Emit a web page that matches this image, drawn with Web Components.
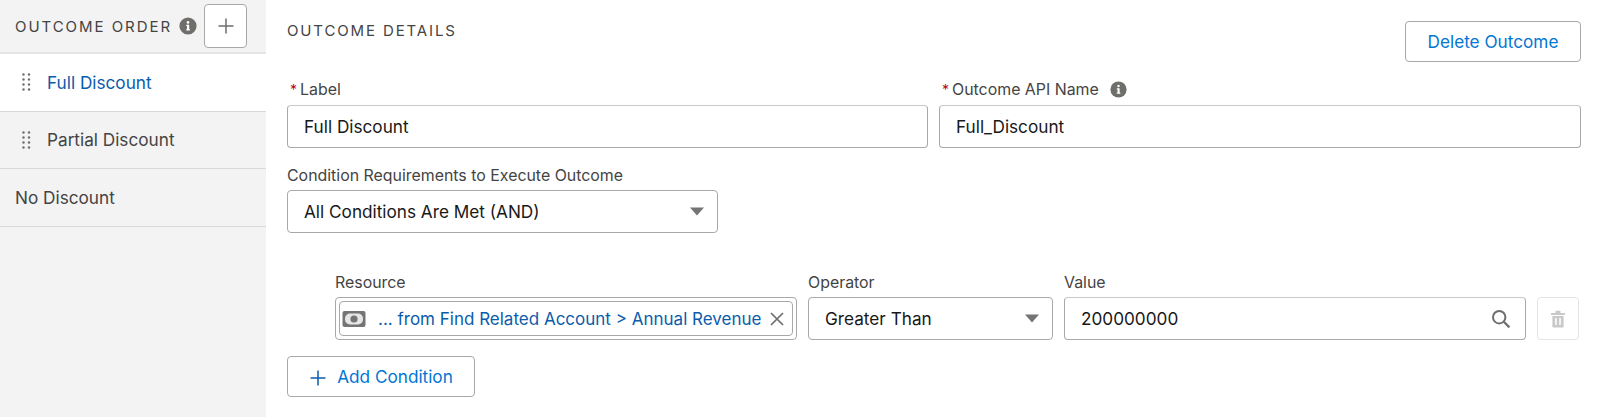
<!DOCTYPE html>
<html>
<head>
<meta charset="utf-8">
<title>Outcome Details</title>
<style>
  html, body { margin: 0; height: 100%; background: #fff; }
  body { font-family: Inter, "Liberation Sans", sans-serif; color: #181818; }
  outcome-page { height: 417px; }
</style>
</head>
<body>
<outcome-page>
  <outcome-sidebar slot="side">
    <outcome-row active drag>Full Discount</outcome-row>
    <outcome-row drag>Partial Discount</outcome-row>
    <outcome-row>No Discount</outcome-row>
  </outcome-sidebar>

  <outcome-details>
    <form-field slot="label-field" label="Label" required>
      <text-box value="Full Discount"></text-box>
    </form-field>
    <form-field slot="name-field" label="Outcome API Name" required info>
      <text-box value="Full_Discount"></text-box>
    </form-field>
    <form-field slot="logic-field" label="Condition Requirements to Execute Outcome">
      <select-box value="All Conditions Are Met (AND)"></select-box>
    </form-field>
    <condition-row>
      <form-field slot="resource" label="Resource"><resource-pill>... from Find Related Account &gt; Annual Revenue</resource-pill></form-field>
      <form-field slot="operator" label="Operator"><select-box value="Greater Than"></select-box></form-field>
      <form-field slot="value" label="Value"><text-box value="200000000" search></text-box></form-field>
    </condition-row>
  </outcome-details>
</outcome-page>

<script>
// Shared icons
const icons = {
  info: `<svg viewBox="0 0 18 18" width="18" height="18"><circle cx="9" cy="9" r="8.6" fill="#706e6b"/><rect x="8" y="7.8" width="2.2" height="5.4" fill="#fff"/><rect x="7.2" y="7.8" width="2" height="1.2" fill="#fff"/><rect x="7.2" y="12.2" width="3.8" height="1.2" fill="#fff"/><circle cx="9" cy="5.4" r="1.3" fill="#fff"/></svg>`,
  plus: `<svg viewBox="0 0 18 18" width="18" height="18"><path d="M9 1.5v15M1.5 9h15" stroke="currentColor" stroke-width="1.5" fill="none"/></svg>`,
  arrow: `<svg viewBox="0 0 14 8" width="14" height="9"><path d="M0 0h14L7 8z" fill="#747474"/></svg>`,
  close: `<svg viewBox="0 0 14 14" width="14" height="14"><path d="M1 1l12 12M13 1L1 13" stroke="#706e6b" stroke-width="1.7" fill="none"/></svg>`,
  search: `<svg viewBox="0 0 20 20" width="20" height="20"><circle cx="8.2" cy="8.2" r="6.2" stroke="#706e6b" stroke-width="2" fill="none"/><path d="M12.8 12.8l5.6 5.6" stroke="#706e6b" stroke-width="2.2" fill="none"/></svg>`,
  trash: `<svg viewBox="0 0 16 18" width="16" height="18" fill="#c9c9c9"><rect x="1" y="3" width="14" height="2" rx=".5"/><rect x="5.5" y="0.8" width="5" height="2.4" rx=".6"/><path d="M2.4 6h11.2v10.4c0 .7-.5 1.2-1.2 1.2H3.600c-.7 0-1.200-.5-1.200-1.200z"/><rect x="5.200" y="8" width="1.500" height="7" fill="#fff"/><rect x="9.300" y="8" width="1.500" height="7" fill="#fff"/></svg>`,
  money: `<svg viewBox="0 0 24 18" width="24" height="18"><rect x="0.500" y="1" width="23" height="16" rx="2" fill="#747474"/><rect x="3" y="3.500" width="18" height="11" rx="5" fill="#e5e5e5"/><circle cx="12" cy="9" r="3.600" fill="#747474"/></svg>`
};

// Page shell - sidebar on the left, details on the right
class OutcomePage extends HTMLElement {
  constructor() {
    super();
    this.attachShadow({ mode: 'open' }).innerHTML = `
      <style>
        :host { display: flex; overflow: hidden; }
        ::slotted(outcome-sidebar) { flex: 0 0 266px; }
        ::slotted(outcome-details) { flex: 1; }
      </style>
      <slot name="side"></slot><slot></slot>`;
  }
}

class OutcomeSidebar extends HTMLElement {
  constructor() {
    super();
    this.attachShadow({ mode: 'open' }).innerHTML = `
      <style>
        :host { display: block; background: #f3f3f3; }
        .head {
          display: flex; align-items: center; height: 52px;
          padding-left: 15px; border-bottom: 2px solid #e5e5e5;
        }
        .title { font-size: 15px; letter-spacing: 1.95px; color: #444; text-transform: uppercase; white-space: nowrap; }
        .info { display: flex; margin-left: 7px; margin-right: 7px; }
        .add {
          display: flex; align-items: center; justify-content: center;
          width: 43px; height: 44px; box-sizing: border-box; background: #fff;
          border: 1px solid #a8a8a8; border-radius: 4px; color: #706e6b;
        }
      </style>
      <div class="head">
        <span class="title">Outcome Order</span>
        <span class="info">${icons.info}</span>
        <span class="add">${icons.plus}</span>
      </div>
      <slot></slot>`;
  }
}

class OutcomeRow extends HTMLElement {
  constructor() {
    super();
    this.attachShadow({ mode: 'open' }).innerHTML = `
      <style>
        :host {
          display: flex; align-items: center; height: 56.500px; padding-left: 15px;
          border-bottom: 1px solid #d8d8d8; font-size: 17.200px; color: #444;
        }
        :host([active]) { background: #fff; color: #0b5cab; }
        :host([drag]) { padding-left: 21px; }
        .grip { display: none; width: 11px; margin-right: 15px; }
        :host([drag]) .grip { display: block; }
      </style>
      <svg class="grip" viewBox="0 0 9 18" width="9" height="18" fill="#706e6b">
        <circle cx="1.500" cy="1.500" r="1.200"/><circle cx="7" cy="1.500" r="1.200"/>
        <circle cx="1.500" cy="6.500" r="1.200"/><circle cx="7" cy="6.500" r="1.200"/>
        <circle cx="1.500" cy="11.500" r="1.200"/><circle cx="7" cy="11.500" r="1.200"/>
        <circle cx="1.500" cy="16.500" r="1.200"/><circle cx="7" cy="16.500" r="1.200"/>
      </svg>
      <slot></slot>`;
  }
}

class OutcomeDetails extends HTMLElement {
  constructor() {
    super();
    this.attachShadow({ mode: 'open' }).innerHTML = `
      <style>
        :host { display: block; padding: 21px 20px 0 21px; background: #fff; }
        .top { display: flex; justify-content: space-between; align-items: flex-start; height: 41px; }
        .title { font-size: 15px; letter-spacing: 1.86px; color: #444; text-transform: uppercase; }
        .names { display: grid; grid-template-columns: 641px 642px; gap: 11px; margin-top: 19px; }
        .logic { width: 431px; margin-top: 18px; --label-shift: 1px; }
        .rows { margin: 40px 0 0 48px; --label-shift: 1px; }
        .add { margin-top: 16px; }
      </style>
      <div class="top">
        <span class="title">Outcome Details</span>
        <sf-button style="width:176px">Delete Outcome</sf-button>
      </div>
      <div class="names"><slot name="label-field"></slot><slot name="name-field"></slot></div>
      <div class="logic"><slot name="logic-field"></slot></div>
      <div class="rows"><slot></slot></div>
      <div class="add"><sf-button icon style="width:188px">Add Condition</sf-button></div>`;
  }
}

class SfButton extends HTMLElement {
  constructor() {
    super();
    const icon = this.hasAttribute('icon') ? `<span class="ic">${icons.plus}</span>` : '';
    this.attachShadow({ mode: 'open' }).innerHTML = `
      <style>
        :host {
          display: flex; align-items: center; justify-content: center; height: 41px;
          box-sizing: border-box; background: #fff; border: 1px solid #a8a8a8;
          border-radius: 4px; color: #0176d3; font-size: 17.200px; white-space: nowrap;
        }
        .ic { display: flex; margin-right: 10px; margin-top: 3px; color: #0b5cab; }
      </style>
      ${icon}<slot></slot>`;
  }
}

class FormField extends HTMLElement {
  constructor() {
    super();
    const req = this.hasAttribute('required') ? '<abbr>*</abbr>' : '';
    const info = this.hasAttribute('info') ? `<span class="info">${icons.info}</span>` : '';
    this.attachShadow({ mode: 'open' }).innerHTML = `
      <style>
        :host { display: block; }
        .label {
          display: flex; align-items: center; height: 17px; font-size: 15.900px; color: #444;
          padding-top: var(--label-shift, 0px); margin-bottom: calc(7px - var(--label-shift, 0px));
        }
        abbr { color: #ba0517; margin: 0 3px 0 3px; font-size: 14px; }
        .info { display: flex; margin-left: 11px; }
        .info svg { width: 17px; height: 17px; }
      </style>
      <div class="label">${req}<span>${this.getAttribute('label')}</span>${info}</div>
      <slot></slot>`;
  }
}

class TextBox extends HTMLElement {
  constructor() {
    super();
    const search = this.hasAttribute('search') ? icons.search : '';
    this.attachShadow({ mode: 'open' }).innerHTML = `
      <style>
        :host {
          display: flex; align-items: center; justify-content: space-between;
          height: 43px; box-sizing: border-box; padding: 0 14px 0 16px; background: #fff;
          border: 1px solid #a8a8a8; border-top-color: #c9c9c9; border-radius: 4px;
          font-size: 17.200px; color: #181818;
        }
      </style>
      <span>${this.getAttribute('value')}</span>${search}`;
  }
}

class SelectBox extends HTMLElement {
  constructor() {
    super();
    this.attachShadow({ mode: 'open' }).innerHTML = `
      <style>
        :host {
          display: flex; align-items: center; justify-content: space-between;
          height: 43px; box-sizing: border-box; padding: 0 13px 0 16px; background: #fff;
          border: 1px solid #a8a8a8; border-radius: 4px; font-size: 17.200px; color: #181818;
        }
        svg { display: block; }
      </style>
      <span>${this.getAttribute('value')}</span>${icons.arrow}`;
  }
}

class ResourcePill extends HTMLElement {
  constructor() {
    super();
    this.attachShadow({ mode: 'open' }).innerHTML = `
      <style>
        :host {
          display: block; height: 43px; box-sizing: border-box; padding: 3px;
          background: #fff; border: 1px solid #a8a8a8; border-radius: 4px;
        }
        .pill {
          display: flex; align-items: center; height: 35px; box-sizing: border-box;
          padding: 0 8px 0 2px; border: 1px solid #a8a8a8; border-radius: 4px;
          font-size: 17px; color: #0b5cab; white-space: nowrap;
        }
        .text { flex: 1; margin-left: 12px; }
      </style>
      <div class="pill">${icons.money}<span class="text"><slot></slot></span>${icons.close}</div>`;
  }
}

class ConditionRow extends HTMLElement {
  constructor() {
    super();
    this.attachShadow({ mode: 'open' }).innerHTML = `
      <style>
        :host { display: grid; grid-template-columns: 462px 245px 462px 42px; column-gap: 11px; }
        .del {
          display: flex; align-items: center; justify-content: center; align-self: end;
          height: 43px; box-sizing: border-box; border: 1px solid #e5e5e5; border-radius: 4px; background: #fff;
        }
      </style>
      <slot name="resource"></slot><slot name="operator"></slot><slot name="value"></slot>
      <div class="del">${icons.trash}</div>`;
  }
}

customElements.define('outcome-page', OutcomePage);
customElements.define('outcome-sidebar', OutcomeSidebar);
customElements.define('outcome-row', OutcomeRow);
customElements.define('outcome-details', OutcomeDetails);
customElements.define('sf-button', SfButton);
customElements.define('form-field', FormField);
customElements.define('text-box', TextBox);
customElements.define('select-box', SelectBox);
customElements.define('resource-pill', ResourcePill);
customElements.define('condition-row', ConditionRow);
</script>
</body>
</html>
